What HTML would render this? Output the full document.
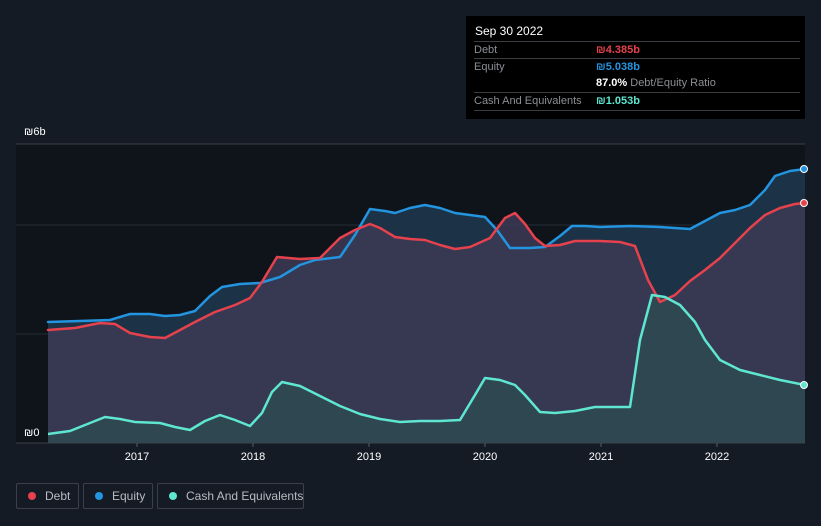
<!DOCTYPE html><html><head><style>
html,body{margin:0;width:821px;height:526px;overflow:hidden}
body{background:#151b25;font-family:"Liberation Sans",sans-serif;position:relative}
.tip{position:absolute;left:466px;top:16px;width:339px;height:103px;background:#000;color:#8c8f94;font-size:11px}
.tip .h{position:absolute;left:9px;top:8px;color:#fff;font-size:12px}
.row{position:absolute;left:8px;width:326px;border-top:1px solid #3a3d42;height:17px;line-height:17px;white-space:nowrap}
.row span{position:absolute;left:0}.row b{position:absolute;left:122px;font-weight:bold}
.leg{position:absolute;top:483px;height:26px;border:1px solid #3b4048;border-radius:2px;color:#b8bcc2;font-size:12px;line-height:24px;box-sizing:border-box;white-space:nowrap}
.leg i{position:absolute;left:11px;top:8px;width:8px;height:8px;border-radius:50%}
.leg span{position:absolute;left:28px}
</style></head><body>
<svg width="821" height="526" style="position:absolute;left:0;top:0">
<rect x="16" y="144" width="789" height="299" fill="#0f141b"/>
<line x1="16" y1="144" x2="805" y2="144" stroke="#3a3f47"/>
<line x1="16" y1="225" x2="805" y2="225" stroke="#262b33"/>
<line x1="16" y1="334" x2="805" y2="334" stroke="#262b33"/>
<line x1="16" y1="443" x2="805" y2="443" stroke="#3a3f47"/>
<polygon fill="#1b3247" points="48,443 48,322 80,321 110,320 130,314 150,314 165,316 180,315 195,311 210,296 222,287 240,284 260,283 280,277 300,265 315,260 340,257 355,235 370,209 385,211 395,213 410,208 425,205 440,208 455,213 470,215 485,217 497,230 510,248 530,248 545,247 560,236 572,226 585,226 600,227 630,226 660,227 690,229 705,221 720,213 735,210 750,205 765,190 775,176 790,171 805,169 805,443"/>
<polygon fill="#3c3a55" fill-opacity="0.85" points="48,443 48,330 75,328 100,323 115,324 130,333 150,337 165,338 180,330 195,322 215,312 235,305 250,298 262,282 277,257 300,259 320,258 340,238 355,230 370,224 380,228 395,237 410,239 425,240 440,245 455,249 470,247 490,238 505,218 515,213 525,224 535,238 545,246 560,245 575,241 600,241 620,242 635,246 648,280 660,302 675,295 690,281 705,270 720,258 735,243 750,228 765,215 780,208 795,204 805,203 805,443"/>
<polygon fill="#2e4a50" fill-opacity="0.85" points="48,443 48,434 70,431 90,423 105,417 120,419 135,422 160,423 175,427 190,430 205,421 220,415 235,420 250,426 262,413 272,392 282,382 300,386 320,396 340,406 360,414 380,419 400,422 420,421 440,421 460,420 475,395 485,378 500,380 515,385 525,395 540,412 555,413 575,411 595,407 615,407 630,407 640,340 652,295 665,297 680,305 695,322 705,340 720,360 740,370 760,375 780,380 805,385 805,443"/>
<g fill="none" stroke-width="2.5" stroke-linejoin="round" stroke-linecap="round">
<polyline stroke="#2394df" points="48,322 80,321 110,320 130,314 150,314 165,316 180,315 195,311 210,296 222,287 240,284 260,283 280,277 300,265 315,260 340,257 355,235 370,209 385,211 395,213 410,208 425,205 440,208 455,213 470,215 485,217 497,230 510,248 530,248 545,247 560,236 572,226 585,226 600,227 630,226 660,227 690,229 705,221 720,213 735,210 750,205 765,190 775,176 790,171 805,169"/>
<polyline stroke="#e5424d" points="48,330 75,328 100,323 115,324 130,333 150,337 165,338 180,330 195,322 215,312 235,305 250,298 262,282 277,257 300,259 320,258 340,238 355,230 370,224 380,228 395,237 410,239 425,240 440,245 455,249 470,247 490,238 505,218 515,213 525,224 535,238 545,246 560,245 575,241 600,241 620,242 635,246 648,280 660,302 675,295 690,281 705,270 720,258 735,243 750,228 765,215 780,208 795,204 805,203"/>
<polyline stroke="#5ee6d0" points="48,434 70,431 90,423 105,417 120,419 135,422 160,423 175,427 190,430 205,421 220,415 235,420 250,426 262,413 272,392 282,382 300,386 320,396 340,406 360,414 380,419 400,422 420,421 440,421 460,420 475,395 485,378 500,380 515,385 525,395 540,412 555,413 575,411 595,407 615,407 630,407 640,340 652,295 665,297 680,305 695,322 705,340 720,360 740,370 760,375 780,380 805,385"/>
</g>
<circle cx="804" cy="169" r="3.5" fill="#2394df" stroke="#fff" stroke-width="1"/>
<circle cx="804" cy="203" r="3.5" fill="#e5424d" stroke="#fff" stroke-width="1"/>
<circle cx="804" cy="385" r="3.5" fill="#5ee6d0" stroke="#fff" stroke-width="1"/>
<rect x="16" y="424" width="32" height="18" fill="#0f141b"/>
<g fill="#fff" font-size="11" font-family="Liberation Sans, sans-serif">
<text x="24" y="135">₪6b</text><text x="24" y="436">₪0</text>
<g text-anchor="middle"><text x="137" y="460">2017</text><text x="253" y="460">2018</text><text x="369" y="460">2019</text><text x="485" y="460">2020</text><text x="601" y="460">2021</text><text x="717" y="460">2022</text></g>
</g>
<g stroke="#555a62"><line x1="137" y1="443" x2="137" y2="447"/><line x1="253" y1="443" x2="253" y2="447"/><line x1="369" y1="443" x2="369" y2="447"/><line x1="485" y1="443" x2="485" y2="447"/><line x1="601" y1="443" x2="601" y2="447"/><line x1="717" y1="443" x2="717" y2="447"/></g>
</svg>
<div class="tip"><div class="h">Sep 30 2022</div>
<div class="row" style="top:25px"><span>Debt</span><b style="color:#e5424d">₪4.385b</b></div>
<div class="row" style="top:42px"><span>Equity</span><b style="color:#2394df">₪5.038b</b></div>
<div class="row" style="top:59px;border-top:none"><b style="color:#fff">87.0% <span style="position:static;color:#8c8f94;font-weight:normal">Debt/Equity Ratio</span></b></div>
<div class="row" style="top:76px"><span>Cash And Equivalents</span><b style="color:#5ee6d0">₪1.053b</b></div>
<div class="row" style="top:94px;height:0"></div>
</div>
<div class="leg" style="left:16px;width:63px"><i style="background:#e5424d"></i><span>Debt</span></div>
<div class="leg" style="left:83px;width:70px"><i style="background:#2394df"></i><span>Equity</span></div>
<div class="leg" style="left:157px;width:147px"><i style="background:#5ee6d0"></i><span>Cash And Equivalents</span></div>
</body></html>
